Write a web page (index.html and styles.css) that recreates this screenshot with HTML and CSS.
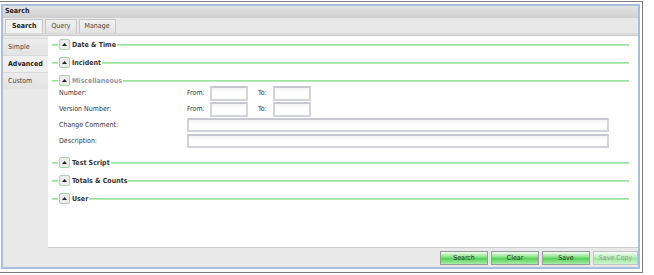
FILE: index.html
```html
<!DOCTYPE html>
<html lang="en">
<head>
  <meta charset="UTF-8">
  <title>Search</title>
  <link rel="stylesheet" href="styles.css">
</head>
<body>
  <div class="frame">
    <div class="panel">
      <div class="panel-title">Search</div>
      <div class="tabs">
        <div class="tab active">Search</div>
        <div class="tab">Query</div>
        <div class="tab">Manage</div>
      </div>
      <div class="tab-rule"></div>

      <div class="panel-body">
        <div class="side-tabs">
          <div class="side-tab">Simple</div>
          <div class="side-tab active">Advanced</div>
          <div class="side-tab">Custom</div>
        </div>

        <div class="main">
          <div class="criteria">
            <div class="group">
              <div class="legend">
                <span class="lead"></span>
                <span class="toggle"><svg width="5" height="3" viewBox="0 0 5 3"><path d="M0 3 L2.5 0 L5 3 Z" fill="#222"/></svg></span>
                <span class="legend-text">Date &amp; Time</span>
                <span class="rule"></span>
              </div>
            </div>

            <div class="group">
              <div class="legend">
                <span class="lead"></span>
                <span class="toggle"><svg width="5" height="3" viewBox="0 0 5 3"><path d="M0 3 L2.5 0 L5 3 Z" fill="#222"/></svg></span>
                <span class="legend-text">Incident</span>
                <span class="rule"></span>
              </div>
            </div>

            <div class="group open">
              <div class="legend">
                <span class="lead"></span>
                <span class="toggle"><svg width="5" height="3" viewBox="0 0 5 3"><path d="M0 3 L2.5 0 L5 3 Z" fill="#222"/></svg></span>
                <span class="legend-text muted">Miscellaneous</span>
                <span class="rule"></span>
              </div>
              <div class="fields">
                <div class="field">
                  <label class="field-label">Number:</label>
                  <span class="range-label">From:</span>
                  <input class="input small" type="text">
                  <span class="range-label to">To:</span>
                  <input class="input small" type="text">
                </div>
                <div class="field">
                  <label class="field-label">Version Number:</label>
                  <span class="range-label">From:</span>
                  <input class="input small" type="text">
                  <span class="range-label to">To:</span>
                  <input class="input small" type="text">
                </div>
                <div class="field">
                  <label class="field-label">Change Comment:</label>
                  <input class="input wide" type="text">
                </div>
                <div class="field">
                  <label class="field-label">Description:</label>
                  <input class="input wide" type="text">
                </div>
              </div>
            </div>

            <div class="group">
              <div class="legend">
                <span class="lead"></span>
                <span class="toggle"><svg width="5" height="3" viewBox="0 0 5 3"><path d="M0 3 L2.5 0 L5 3 Z" fill="#222"/></svg></span>
                <span class="legend-text">Test Script</span>
                <span class="rule"></span>
              </div>
            </div>

            <div class="group">
              <div class="legend">
                <span class="lead"></span>
                <span class="toggle"><svg width="5" height="3" viewBox="0 0 5 3"><path d="M0 3 L2.5 0 L5 3 Z" fill="#222"/></svg></span>
                <span class="legend-text">Totals &amp; Counts</span>
                <span class="rule"></span>
              </div>
            </div>

            <div class="group">
              <div class="legend">
                <span class="lead"></span>
                <span class="toggle"><svg width="5" height="3" viewBox="0 0 5 3"><path d="M0 3 L2.5 0 L5 3 Z" fill="#222"/></svg></span>
                <span class="legend-text">User</span>
                <span class="rule"></span>
              </div>
            </div>
          </div>

          <div class="actions">
            <button class="btn">Search</button>
            <button class="btn">Clear</button>
            <button class="btn">Save</button>
            <button class="btn" disabled>Save Copy</button>
          </div>
        </div>
      </div>
    </div>
  </div>
</body>
</html>
```

FILE: styles.css
```css
body {
  margin: 0;
  background: #fff;
  font-family: 'DejaVu Sans Condensed', 'DejaVu Sans', sans-serif;
  font-size: 7px;
  color: #333;
}

.frame {
  margin-top: 1px;
  width: 639px;
  height: 265px;
  padding: 2px 2px 3px 1px;
  border: 1px solid #7c7c7c;
  border-left: none;
}

.panel {
  box-sizing: border-box;
  height: 100%;
  border: 2px solid #a7bfdc;
  display: flex;
  flex-direction: column;
}

.panel-title {
  height: 12px;
  line-height: 11px;
  padding-left: 2px;
  font-weight: bold;
  color: #222;
  background: linear-gradient(#e4e4e4, #cfcfcf);
}

.tabs {
  height: 15px;
  display: flex;
  align-items: flex-end;
  gap: 2px;
  padding-left: 2px;
  background: #e8e8e8;
}

.tab {
  height: 13px;
  line-height: 13px;
  padding: 0 5px;
  border: 1px solid #c6c6c6;
  border-bottom: none;
  background: linear-gradient(#f1f1f1, #e2e2e2);
  color: #444;
}

.tab.active {
  padding: 0 6px;
  font-weight: bold;
  color: #222;
  background: #f2f2f2;
}

.tab-rule {
  height: 1px;
  border-top: 1px solid #d8d8d8;
  border-bottom: 1px solid #c9c9c9;
  background: #dedede;
}

.panel-body {
  flex: 1;
  display: flex;
  background: #e9e9e9;
}

.side-tabs {
  width: 45px;
  padding-top: 2px;
}

.side-tab {
  height: 16px;
  line-height: 16px;
  padding-left: 5px;
  border-top: 1px solid #dadada;
  background: linear-gradient(#ececec, #e3e3e3);
  color: #444;
}

.side-tab.active {
  font-weight: bold;
  color: #222;
  background: #f0f0f0;
}

.main {
  flex: 1;
  display: flex;
  flex-direction: column;
}

.criteria {
  flex: 1;
  background: #fff;
  border-bottom: 1px solid #cdcdcd;
  padding: 3px 9px 0 4px;
}

.group {
  margin-bottom: 7px;
}

.group.open {
  margin-bottom: 8px;
}

.legend {
  height: 11px;
  display: flex;
  align-items: center;
}

.lead,
.rule {
  height: 2px;
  background: linear-gradient(#8fe08f, #c4efc4);
}

.lead {
  width: 6px;
}

.rule {
  flex: 1;
}

.toggle {
  box-sizing: border-box;
  width: 11px;
  height: 11px;
  margin-left: 1px;
  border: 1px solid #9fdb9f;
  border-radius: 2px;
  background: #ececec;
  display: flex;
  align-items: center;
  justify-content: center;
}

.legend-text {
  padding: 0 1px 0 2px;
  font-weight: bold;
  color: #333;
}

.legend-text.muted {
  color: #8c9aaa;
}

.fields {
  margin-top: -1px;
  padding-left: 7px;
}

.field {
  height: 16px;
  display: flex;
  align-items: center;
}

.field-label {
  width: 128px;
}

.range-label {
  width: 23px;
}

.range-label.to {
  width: 15px;
  margin-left: 10px;
}

.input {
  box-sizing: border-box;
  height: 15px;
  margin: 0;
  border: 2px solid #d3d3dc;
  border-top-color: #c8c8d2;
  background: linear-gradient(#f3f3f6, #fff 40%);
  font: inherit;
}

.input.small {
  width: 38px;
}

.input.wide {
  width: 422px;
  height: 14px;
}

.actions {
  height: 19px;
  display: flex;
  align-items: center;
  justify-content: flex-end;
  gap: 3px;
}

.btn {
  box-sizing: border-box;
  width: 48px;
  height: 14px;
  padding: 0;
  border: 1px solid #9a9a9a;
  background: linear-gradient(#f4fff4, #7fe07f 45%, #58d058 55%, #a7eea7);
  font: inherit;
  color: #333;
}

.btn:disabled {
  width: 45px;
  border-color: #c4c4c4;
  background: linear-gradient(#f8fff8, #b7efb7 45%, #9ee89e 55%, #cff6cf);
  color: #9aa09a;
}
```
